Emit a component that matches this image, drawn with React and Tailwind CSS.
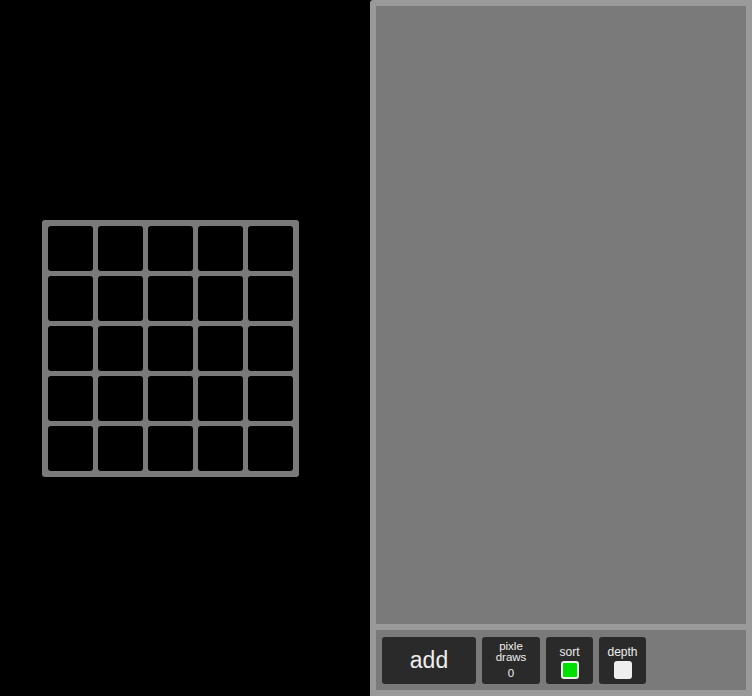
import React from 'react';

const cells = Array.from({ length: 25 });

export default function App() {
  return (
    <div
      className="flex h-[696px] w-[752px] bg-black"
      style={{ fontFamily: '"Liberation Sans", Arial, sans-serif' }}
    >
      {/* canvas side */}
      <div className="flex w-[370px] items-center pl-[42px]">
        <div className="grid grid-cols-5 gap-[5px] rounded-[3px] bg-[#7a7a7a] p-[6px]">
          {cells.map((_, i) => (
            <div key={i} className="h-[45px] w-[45px] rounded-[3px] bg-black" />
          ))}
        </div>
      </div>

      {/* side panel */}
      <div className="flex flex-1 flex-col gap-[6px] rounded-tl-[3px] bg-[#9a9a9a] p-[6px]">
        <div className="flex-1 bg-[#7a7a7a]" />
        <div className="flex h-[60px] items-center gap-[6px] bg-[#7a7a7a] px-[6px]">
          <button className="flex h-[47px] w-[94px] items-center justify-center rounded-[3px] bg-[#2a2a2a] text-[23px] text-[#eeeeee]">
            add
          </button>
          <div className="flex h-[47px] w-[58px] flex-col items-center rounded-[3px] bg-[#2a2a2a] pt-[4px] text-[11.5px] leading-[11.5px] text-[#eeeeee]">
            <span>pixle</span>
            <span>draws</span>
            <span className="mt-[4px]">0</span>
          </div>
          <div className="flex h-[47px] w-[47px] flex-col items-center rounded-[3px] bg-[#2a2a2a] pt-[8px] text-[12px] leading-[14px] text-[#eeeeee]">
            <span>sort</span>
            <div className="mt-[2px] h-[18px] w-[18px] rounded-[3px] border-2 border-[#eeeeee] bg-[#00e000]" />
          </div>
          <div className="flex h-[47px] w-[47px] flex-col items-center rounded-[3px] bg-[#2a2a2a] pt-[8px] text-[12px] leading-[14px] text-[#eeeeee]">
            <span>depth</span>
            <div className="mt-[2px] h-[18px] w-[18px] rounded-[3px] bg-[#eeeeee]" />
          </div>
        </div>
      </div>
    </div>
  );
}
